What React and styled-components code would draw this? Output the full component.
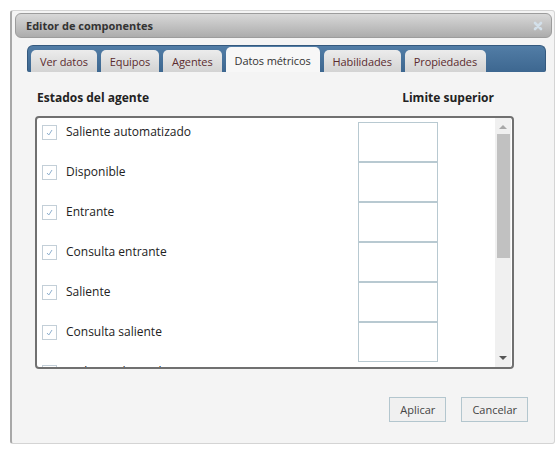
import React from 'react';
import styled, {createGlobalStyle} from 'styled-components';

const tabs = ['Ver datos', 'Equipos', 'Agentes', 'Datos métricos', 'Habilidades', 'Propiedades'];
const states = [
  {name: 'Saliente automatizado', limit: true},
  {name: 'Disponible', limit: true},
  {name: 'Entrante', limit: true},
  {name: 'Consulta entrante', limit: true},
  {name: 'Saliente', limit: true},
  {name: 'Consulta saliente', limit: true},
  {name: 'Trabajo adicional', limit: false},
];

export default () => {
  return (
    <>
      <Global/>
      <Dialog>
        <Header>
          <Title>Editor de componentes</Title>
          <Close viewBox="0 0 10 10">
            <path d="M2 2 L8 8 M8 2 L2 8"/>
          </Close>
        </Header>
        <TabBar>
          {tabs.map(t => (
            <Tab key={t} active={t === 'Datos métricos'}>{t}</Tab>
          ))}
        </TabBar>
        <Content>
          <Heads>
            <Head>Estados del agente</Head>
            <Head>Limite superior</Head>
          </Heads>
          <ListBox>
            <Rows>
              {states.map(s => (
                <Row key={s.name}>
                  <Check>
                    <svg viewBox="0 0 13 13" width="13" height="13">
                      <path d="M4 7 L5.8 9 L9 4" fill="none" stroke="#8fb0cf" strokeWidth="1"/>
                    </svg>
                  </Check>
                  <Label>{s.name}</Label>
                  {s.limit && <Limit/>}
                </Row>
              ))}
            </Rows>
            <Scroll>
              <Arrow viewBox="0 0 8 5" color="#a8a8a8"><path d="M0 5 L4 1 L8 5 Z"/></Arrow>
              <Track>
                <Thumb/>
              </Track>
              <Arrow viewBox="0 0 8 5" color="#555"><path d="M0 0 L4 4 L8 0 Z"/></Arrow>
            </Scroll>
          </ListBox>
          <Buttons>
            <Button>Aplicar</Button>
            <Button>Cancelar</Button>
          </Buttons>
        </Content>
      </Dialog>
    </>
  )
}

const Global = createGlobalStyle`
    body {
      margin: 0;
      background: #fff;
      font-family: "Open Sans", "DejaVu Sans", sans-serif;
    }
  `;

const Dialog = styled.div`
    box-sizing: border-box;
    margin: 10px 0 0 10px;
    width: 545px;
    height: 434px;
    padding: 2px 2px 0 3px;
    background: #f4f4f4;
    border: 1px solid #d4d4d4;
    border-left: 2px solid #a8a8a8;
    border-radius: 3px;
    display: flex;
    flex-direction: column;
  `;

const Header = styled.div`
    box-sizing: border-box;
    height: 25px;
    display: flex;
    align-items: center;
    justify-content: space-between;
    padding: 0 8px 0 10px;
    background: linear-gradient(#d8d8d8, #acacac);
    border: 1px solid #9c9c9c;
    border-radius: 6px;
  `;

const Title = styled.span`
    font-size: 11px;
    font-weight: 700;
    color: #333;
  `;

const Close = styled.svg`
    width: 10px;
    height: 10px;
    stroke: #d3e0ea;
    stroke-width: 2.6;
    stroke-linecap: round;
  `;

const TabBar = styled.div`
    box-sizing: border-box;
    height: 27px;
    margin: 7px 6px 0 12px;
    padding: 0 3px;
    display: flex;
    align-items: flex-end;
    gap: 4px;
    background: linear-gradient(#527da6, #3d6790);
    border: 1px solid #34597e;
    border-bottom: none;
    border-radius: 6px 6px 2px 2px;
  `;

const Tab = styled.div`
    box-sizing: border-box;
    height: ${p => p.active ? '25px' : '22px'};
    padding: 0 9px;
    display: flex;
    align-items: center;
    font-size: 11px;
    letter-spacing: -0.1px;
    color: ${p => p.active ? '#333' : '#5b2b2e'};
    background: ${p => p.active ? '#f7f7f7' : 'linear-gradient(#ececec, #d3d3d3)'};
    border-radius: 5px 5px 0 0;
    padding-top: ${p => p.active ? '1px' : '0'};
  `;

const Content = styled.div`
    display: flex;
    flex-direction: column;
    padding: 0 0 0 20px;
  `;

const Heads = styled.div`
    display: flex;
    justify-content: space-between;
    width: 479px;
    box-sizing: border-box;
    padding: 0 20px 0 2px;
    margin-top: 18px;
    line-height: 16px;
  `;

const Head = styled.span`
    font-size: 12px;
    font-weight: 700;
    color: #222;
  `;

const ListBox = styled.div`
    box-sizing: border-box;
    margin-top: 10px;
    width: 479px;
    height: 253px;
    display: flex;
    background: #fff;
    border: 2px solid #707070;
    border-radius: 4px;
    overflow: hidden;
  `;

const Rows = styled.div`
    flex: 1;
    padding: 4px 0 0 5px;
    overflow: hidden;
  `;

const Row = styled.div`
    display: grid;
    grid-template-columns: 15px 301px 80px;
    height: 40px;
    align-items: start;
  `;

const Check = styled.div`
    box-sizing: border-box;
    width: 15px;
    height: 15px;
    margin-top: 3px;
    border: 1px solid #c3cfd8;
    background: #fff;
    display: flex;
    align-items: center;
    justify-content: center;
  `;

const Label = styled.span`
    padding-left: 9px;
    margin-top: 2px;
    font-size: 12px;
    line-height: 15px;
    color: #222;
  `;

const Limit = styled.div`
    box-sizing: border-box;
    width: 80px;
    height: 40px;
    border: 1px solid #b8c9d1;
    background: #fff;
  `;

const Scroll = styled.div`
    width: 16px;
    margin-right: 1px;
    background: #f0f0f0;
    display: flex;
    flex-direction: column;
    align-items: center;
    padding: 6px 0 6px;
    box-sizing: border-box;
  `;

const Arrow = styled.svg`
    width: 8px;
    height: 5px;
    fill: ${p => p.color};
    flex-shrink: 0;
  `;

const Track = styled.div`
    flex: 1;
    width: 100%;
    padding-top: 5px;
    box-sizing: border-box;
    display: flex;
    justify-content: center;
  `;

const Thumb = styled.div`
    width: 13px;
    height: 124px;
    margin-left: 1px;
    background: #c1c1c1;
  `;

const Buttons = styled.div`
    display: flex;
    justify-content: flex-end;
    gap: 15px;
    margin-top: 28px;
    padding-right: 24px;
  `;

const Button = styled.div`
    box-sizing: border-box;
    height: 25px;
    padding: 0 10px;
    display: flex;
    align-items: center;
    font-size: 11px;
    color: #444;
    background: #f0f0f0;
    border: 1px solid #b3c6ce;
  `;
